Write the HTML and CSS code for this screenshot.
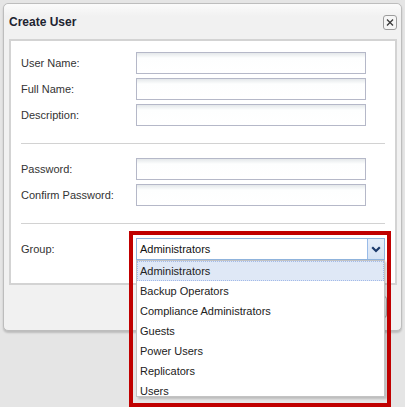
FILE: index.html
```html
<!DOCTYPE html>
<html>
<head>
<meta charset="utf-8">
<link rel="stylesheet" href="styles.css">
</head>
<body>
<div class="dialog">
  <div class="header">
    <span class="title">Create User</span>
    <span class="close" aria-label="Close">
      <svg width="14" height="15" viewBox="0 0 14 15"><rect x="0.5" y="0.5" width="13" height="14" rx="2.5" fill="#f6f6f6" stroke="#9c9c9c"/><path d="M4 4.5 L10 10.5 M10 4.5 L4 10.5" stroke="#3a3a3a" stroke-width="1.3" fill="none"/></svg>
    </span>
  </div>
  <div class="panel">
    <div class="group">
      <div class="row"><span class="label">User Name:</span><span class="input"></span></div>
      <div class="row"><span class="label">Full Name:</span><span class="input"></span></div>
      <div class="row"><span class="label">Description:</span><span class="input"></span></div>
    </div>
    <div class="sep"></div>
    <div class="group">
      <div class="row"><span class="label">Password:</span><span class="input"></span></div>
      <div class="row"><span class="label">Confirm Password:</span><span class="input"></span></div>
    </div>
    <div class="sep"></div>
    <div class="group">
      <div class="row"><span class="label">Group:</span>
        <div class="combo">
          <span class="combo-text">Administrators</span>
          <span class="trigger"><svg width="10" height="7" viewBox="0 0 10 7"><path d="M1.2 1.3 L5 5 L8.8 1.3" stroke="#1b3a6b" stroke-width="2.2" fill="none"/></svg></span>
          <div class="list">
            <div class="item selected">Administrators</div>
            <div class="item">Backup Operators</div>
            <div class="item">Compliance Administrators</div>
            <div class="item">Guests</div>
            <div class="item">Power Users</div>
            <div class="item">Replicators</div>
            <div class="item">Users</div>
          </div>
          <div class="mark"></div>
        </div>
      </div>
    </div>
  </div>
  <div class="footer">
    <span class="btn" aria-label="OK"></span>
    <span class="btn" aria-label="Cancel"></span>
  </div>
</div>
</body>
</html>
```

FILE: styles.css
```css
html, body {
  margin: 0;
  padding: 0;
}
body {
  background: #e5e5e5;
  font-family: "Liberation Sans", Arial, sans-serif;
  font-size: 11px;
  color: #333;
  height: 407px;
  overflow: hidden;
}
.dialog {
  box-sizing: border-box;
  margin: 3px 0 0 3px;
  width: 399px;
  height: 328px;
  border: 1px solid #bdbdbd;
  border-radius: 5px;
  background: #f1f1f1;
  box-shadow: 0 2px 2px rgba(0,0,0,0.18);
  display: flex;
  flex-direction: column;
}
.header {
  height: 35px;
  display: flex;
  align-items: center;
  justify-content: space-between;
  padding: 0 4px 0 5px;
  background: linear-gradient(#fbfbfb, #f1f1f1 12px);
  border-radius: 5px 5px 0 0;
}
.title {
  font-weight: bold;
  font-size: 12px;
  color: #1d2330;
}
.close {
  display: flex;
  margin-top: 1px;
}
.panel {
  box-sizing: border-box;
  margin-left: 5px;
  width: 388px;
  height: 246px;
  border: 2px solid #d3d3d3;
  background: #fff;
  padding: 11px 10px 23px 10px;
  display: flex;
  flex-direction: column;
}
.group {
  display: flex;
  flex-direction: column;
  gap: 4px;
}
.sep {
  height: 1px;
  background: #d2d2d2;
  margin: 17px 0 14px;
}
.row {
  display: flex;
  align-items: center;
  height: 22px;
}
.label {
  width: 115px;
  color: #333;
}
.input {
  box-sizing: border-box;
  width: 230px;
  height: 22px;
  border: 1px solid #b5b8c8;
  background: linear-gradient(#e4e8ea, #fdfefe 5px, #fff);
}
.combo {
  position: relative;
  box-sizing: border-box;
  width: 249px;
  height: 22px;
  border: 1px solid #8fb3dc;
  display: flex;
  align-items: center;
  background: #fff;
}
.combo-text {
  flex: 1;
  padding-left: 3px;
  color: #111;
}
.trigger {
  box-sizing: border-box;
  width: 17px;
  height: 20px;
  border-left: 1px solid #99bbe8;
  background: linear-gradient(#e6eefa, #d6e3f4);
  display: flex;
  align-items: center;
  justify-content: center;
}
.list {
  position: absolute;
  z-index: 10;
  top: 21px;
  left: -1px;
  box-sizing: border-box;
  width: 249px;
  height: 137px;
  overflow: hidden;
  background: #fff;
  border: 1px solid #c3c3c3;
  box-shadow: 2px 2px 2px rgba(0,0,0,0.18);
}
.item {
  box-sizing: border-box;
  height: 20px;
  line-height: 18px;
  padding-left: 2px;
  border: 1px solid transparent;
  color: #222;
}
.item.selected {
  background: #dfe8f6;
  border: 1px dotted #a3bae9;
}
.mark {
  position: absolute;
  z-index: 11;
  top: -8px;
  left: -8px;
  width: 262px;
  height: 176px;
  box-sizing: border-box;
  border: 4px solid #c00000;
}
.footer {
  flex: 1;
  display: flex;
  justify-content: flex-end;
  align-items: flex-start;
  gap: 6px;
  padding: 11px 14px 0 0;
}
.btn {
  box-sizing: border-box;
  width: 75px;
  height: 22px;
  border: 1px solid #a8a8a8;
  border-radius: 3px;
  background: linear-gradient(#fafafa, #e3e3e3);
}
```
